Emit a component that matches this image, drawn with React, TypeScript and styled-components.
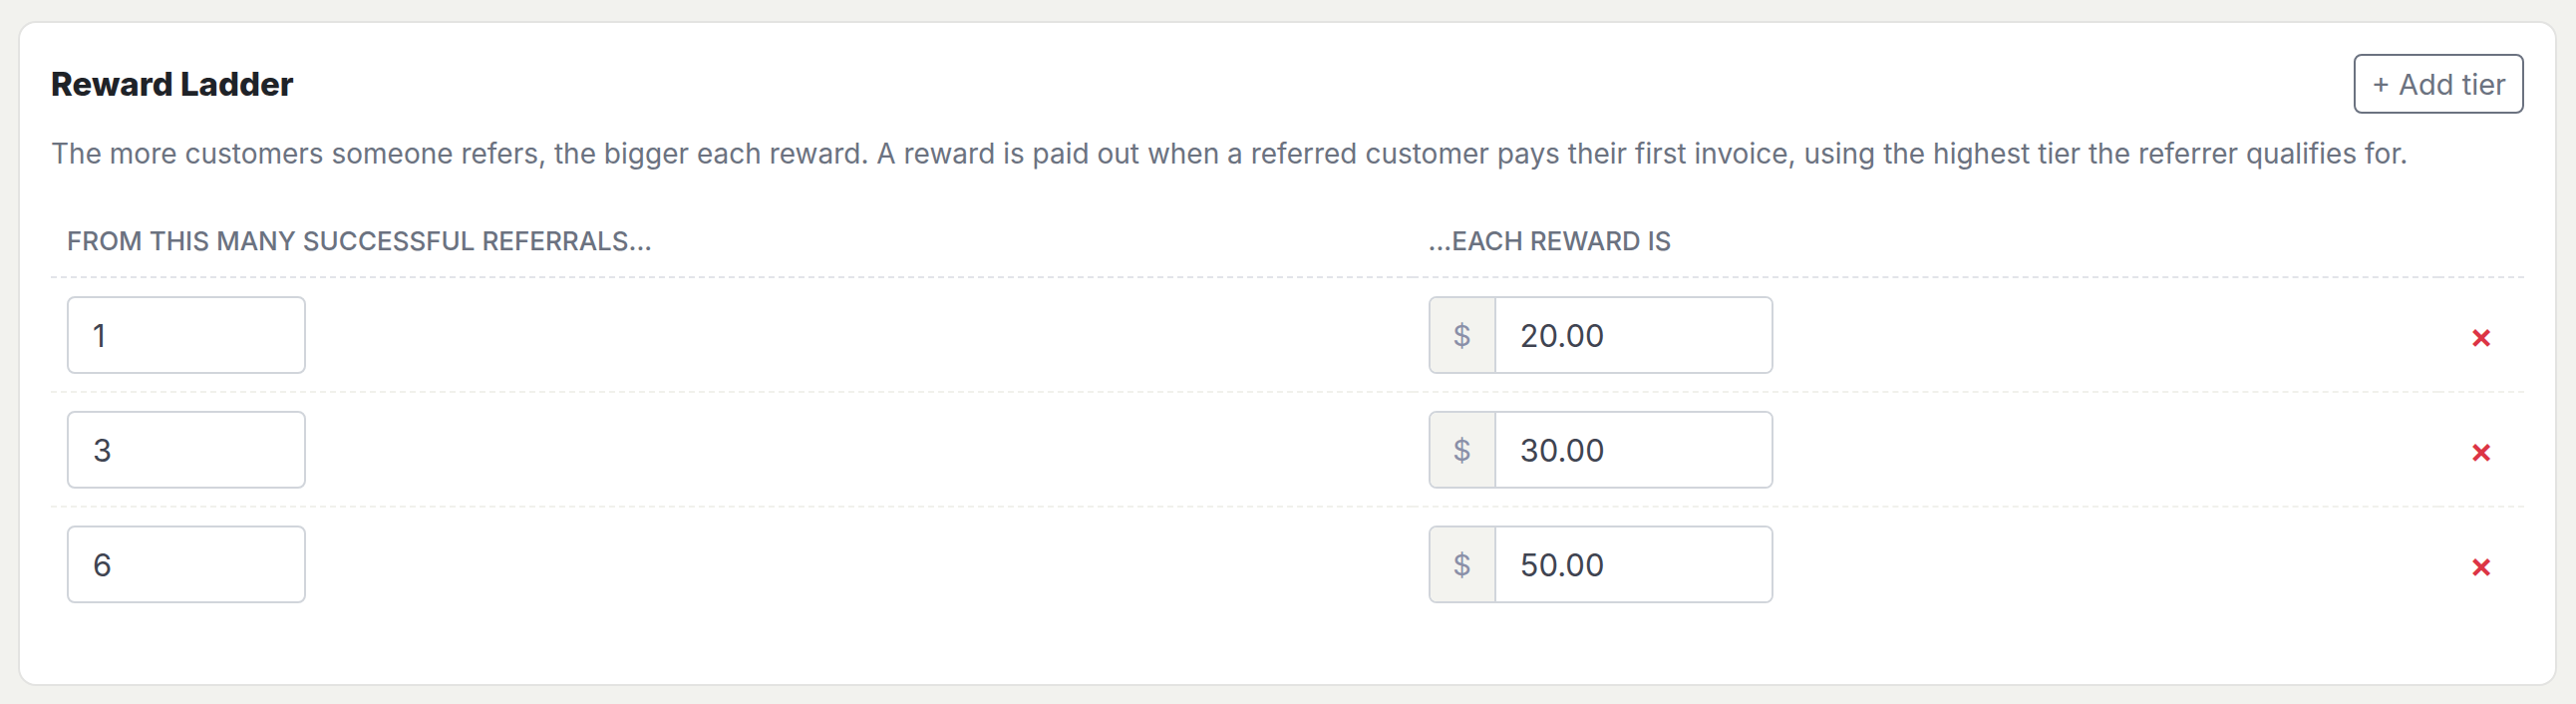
import React, { useState } from 'react';
import styled, { createGlobalStyle } from 'styled-components';

type Tier = { id: number; from: string; amount: string };

const initialTiers: Tier[] = [
  { id: 1, from: '1', amount: '20.00' },
  { id: 2, from: '3', amount: '30.00' },
  { id: 3, from: '6', amount: '50.00' },
];

const App = () => {
  const [tiers, setTiers] = useState<Tier[]>(initialTiers);

  const update = (id: number, key: 'from' | 'amount', value: string) => {
    setTiers(tiers.map((t) => (t.id === id ? { ...t, [key]: value } : t)));
  };

  const addTier = () => {
    const last = tiers[tiers.length - 1];
    setTiers([...tiers, { id: Date.now(), from: '', amount: last ? last.amount : '' }]);
  };

  return (
    <>
      <GlobalStyle />
      <Page>
        <Card>
          <CardHeader>
            <Title>Reward Ladder</Title>
            <AddButton type='button' onClick={addTier}>
              + Add tier
            </AddButton>
          </CardHeader>
          <Description>
            The more customers someone refers, the bigger each reward. A reward is paid out when a
            referred customer pays their first invoice, using the highest tier the referrer
            qualifies for.
          </Description>
          <Table>
            <HeadCell>From this many successful referrals...</HeadCell>
            <HeadCell>...each reward is</HeadCell>
            <HeadCell />
            {tiers.map((tier, i) => (
              <React.Fragment key={tier.id}>
                <Cell $last={i === tiers.length - 1}>
                  <CountInput
                    type='text'
                    value={tier.from}
                    onChange={(e: React.ChangeEvent<HTMLInputElement>) =>
                      update(tier.id, 'from', e.target.value)
                    }
                  />
                </Cell>
                <Cell $last={i === tiers.length - 1}>
                  <MoneyField>
                    <Prefix>$</Prefix>
                    <MoneyInput
                      type='text'
                      value={tier.amount}
                      onChange={(e: React.ChangeEvent<HTMLInputElement>) =>
                        update(tier.id, 'amount', e.target.value)
                      }
                    />
                  </MoneyField>
                </Cell>
                <Cell $last={i === tiers.length - 1} $center>
                  <RemoveButton
                    type='button'
                    aria-label='Remove tier'
                    onClick={() => setTiers(tiers.filter((t) => t.id !== tier.id))}
                  >
                    ×
                  </RemoveButton>
                </Cell>
              </React.Fragment>
            ))}
          </Table>
        </Card>
      </Page>
    </>
  );
};

export default App;

const GlobalStyle = createGlobalStyle`
  html, body {
    margin: 0;
    padding: 0;
    background: #f2f2ee;
    font-family: Inter, 'Liberation Sans', sans-serif;
  }
`;

const Page = styled.div`
  padding: 21px 19px 22px 18px;
`;

const Card = styled.div`
  background: #fff;
  border: 2px solid #e3e3e1;
  border-radius: 18px;
  padding: 31px 31px 64px;
`;

const CardHeader = styled.div`
  display: flex;
  align-items: center;
  justify-content: space-between;
`;

const Title = styled.h2`
  margin: 0;
  font-size: 33px;
  font-weight: 800;
  color: #1f2328;
`;

const AddButton = styled.button`
  height: 60px;
  padding: 0 16px;
  font-family: inherit;
  font-size: 29px;
  color: #6b7280;
  background: #fff;
  border: 2px solid #6b7280;
  border-radius: 8px;
  cursor: pointer;
`;

const Description = styled.p`
  margin: 19px 0 0;
  font-size: 28px;
  line-height: 42px;
  color: #6b7280;
`;

const Table = styled.div`
  display: grid;
  grid-template-columns: 1365fr 1029fr 86px;
  margin-top: 33px;
`;

const HeadCell = styled.div`
  padding: 17px 16px 18px;
  font-size: 26px;
  line-height: 34px;
  font-weight: 500;
  text-transform: uppercase;
  color: #6b7280;
  border-bottom: 2px dashed #e2e4e9;
`;

const Cell = styled.div<{ $last?: boolean; $center?: boolean }>`
  display: flex;
  align-items: center;
  justify-content: ${(p) => (p.$center ? 'center' : 'flex-start')};
  padding: 18px 16px 17px;
  border-bottom: ${(p) => (p.$last ? 'none' : '2px dashed #f1f1ec')};
`;

const baseInput = `
  box-sizing: border-box;
  height: 78px;
  font-family: inherit;
  font-size: 31px;
  color: #3f4451;
  background: #fff;
  outline: none;
`;

const CountInput = styled.input`
  ${baseInput}
  width: 240px;
  padding: 0 24px;
  border: 2px solid #d1d5db;
  border-radius: 8px;
`;

const MoneyField = styled.div`
  display: flex;
  width: 346px;
  height: 78px;
  box-sizing: border-box;
  border: 2px solid #d1d5db;
  border-radius: 8px;
  overflow: hidden;
`;

const Prefix = styled.span`
  display: flex;
  align-items: center;
  justify-content: center;
  width: 64px;
  background: #f3f3ef;
  border-right: 2px solid #d1d5db;
  font-size: 29px;
  color: #8a8fa8;
`;

const MoneyInput = styled.input`
  ${baseInput}
  flex: 1;
  min-width: 0;
  height: 100%;
  padding: 0 24px;
  border: none;
`;

const RemoveButton = styled.button`
  padding: 0;
  border: none;
  background: none;
  font-family: inherit;
  font-size: 36px;
  font-weight: 600;
  line-height: 1;
  color: #dc3545;
  cursor: pointer;
`;
